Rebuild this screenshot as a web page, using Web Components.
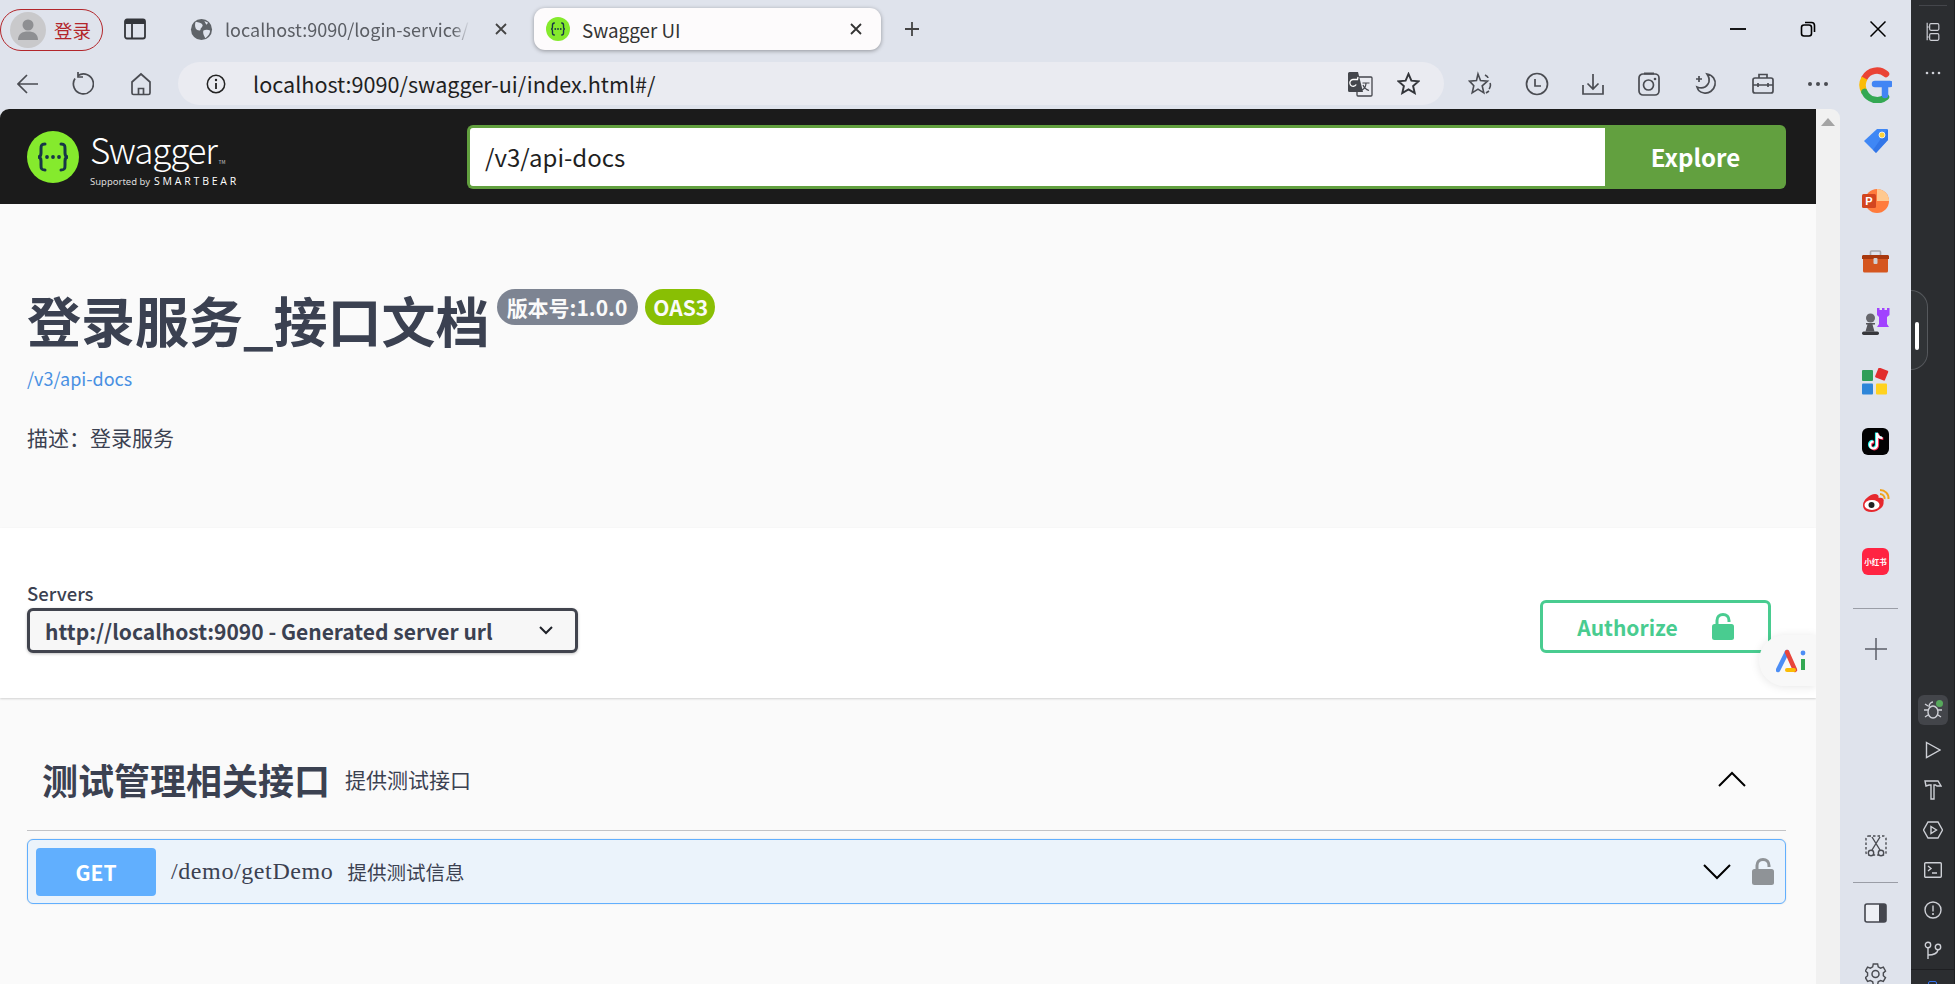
<!DOCTYPE html>
<html lang="zh">
<head>
<meta charset="utf-8">
<title>Swagger UI</title>
<style>
  html, body { margin: 0; height: 100%; overflow: hidden; background: #dfe3ec; }
  body { font-family: "Noto Sans CJK SC", "Noto Sans", sans-serif; color: #3b4151; }
</style>
</head>
<body>
<browser-window>
  <tab-strip slot="tabs"></tab-strip>
  <nav-bar slot="nav" url="localhost:9090/swagger-ui/index.html#/"></nav-bar>
  <side-dock slot="dock"></side-dock>
  <ide-strip slot="ide"></ide-strip>
  <swagger-page slot="page">
    <swagger-topbar slot="top" url="/v3/api-docs"></swagger-topbar>
    <api-info slot="info" link="/v3/api-docs" version="版本号:1.0.0" oas="OAS3">
      <span slot="title">登录服务_接口文档</span>
      描述&#xFF1A;登录服务
    </api-info>
    <server-bar slot="servers" server="http://localhost:9090 - Generated server url"></server-bar>
    <tag-section slot="tags" name="测试管理相关接口" note="提供测试接口">
      <op-block method="GET" path="/demo/getDemo" summary="提供测试信息"></op-block>
    </tag-section>
  </swagger-page>
</browser-window>

<script>
const LOGO = `<svg viewBox="0 0 52 52" width="100%" height="100%">
  <circle cx="26" cy="26" r="26" fill="#85ea2d"/>
  <g fill="none" stroke="#173647" stroke-width="3" stroke-linecap="round">
    <path d="M18 13c-4 0-4 2-4 5v4c0 2-1 4-3 4 2 0 3 2 3 4v4c0 3 0 5 4 5"/>
    <path d="M34 13c4 0 4 2 4 5v4c0 2 1 4 3 4-2 0-3 2-3 4v4c0 3 0 5-4 5"/>
  </g>
  <g fill="#173647"><circle cx="20" cy="26" r="1.900"/><circle cx="26" cy="26" r="1.900"/><circle cx="32" cy="26" r="1.900"/></g>
</svg>`;

const LOCK = `<svg viewBox="0 0 22 27" width="22" height="27">
  <path d="M5 13V7.500C5 3.800 7.500 1.500 11 1.500s6 2.300 6 6V9" fill="none" stroke="currentColor" stroke-width="3"/>
  <rect x="0" y="11" width="22" height="16" rx="2.500" fill="currentColor"/>
</svg>`;

class BrowserWindow extends HTMLElement {
  constructor() {
    super();
    this.attachShadow({mode: 'open'}).innerHTML = `
      <style>
        :host { display: grid; grid-template-columns: 1911px 44px; height: 984px; width: 1955px; overflow: hidden; }
        .main { display: flex; flex-direction: column; min-width: 0; height: 984px; }
        .body { display: grid; grid-template-columns: 1840px 71px; flex: 1; min-height: 0; }
        .left { display: flex; flex-direction: column; min-height: 0; }
        .view { flex: 1; min-height: 0; display: flex; }
      </style>
      <div class="main">
        <slot name="tabs"></slot>
        <div class="body">
          <div class="left">
            <slot name="nav"></slot>
            <div class="view"><slot name="page"></slot></div>
          </div>
          <slot name="dock"></slot>
        </div>
      </div>
      <slot name="ide"></slot>`;
  }
}

class TabStrip extends HTMLElement {
  constructor() {
    super();
    this.attachShadow({mode: 'open'}).innerHTML = `
      <style>
        :host { display: flex; align-items: center; height: 55px; padding-top: 2px; box-sizing: border-box; color: #444; font-size: 18.800px; font-family: "Noto Sans CJK SC", "Noto Sans", sans-serif; }
        .profile { display: flex; align-items: center; width: 103px; height: 42px; box-sizing: border-box; border: 1.500px solid #b3262b; border-radius: 21px; padding-left: 9px; margin-top: 2px; color: #b3262b; font: 18.500px "Noto Sans CJK SC", sans-serif; gap: 8px; }
        .avatar { width: 36px; height: 36px; flex: none; }
        .tabs-btn { margin-left: 21px; width: 22px; height: 22px; flex: none; }
        .tab { display: flex; align-items: center; height: 42px; margin-top: 1px; }
        .tab.idle { margin-left: 44px; width: 317px; color: #5b5e64; font-size: 18px; }
        .tab.idle .label { width: 250px; margin-left: 12px; white-space: nowrap; -webkit-mask-image: linear-gradient(90deg, #000 93%, transparent); mask-image: linear-gradient(90deg, #000 93%, transparent); }
        .tab.idle .x { margin-left: 25px; }
        .tab.active { width: 347px; margin-left: 27px; background: #fdfbfc; border-radius: 11px; box-shadow: 0 1px 4px rgba(0,0,0,.35); padding-left: 12px; box-sizing: border-box; color: #333; }
        .fav { width: 24px; height: 24px; flex: none; }
        .tab.active .label { margin-left: 12px; flex: 1; }
        .tab.active .x { margin-right: 19px; }
        .x { width: 12px; height: 12px; flex: none; }
        .plus { margin-left: 23px; width: 16px; height: 16px; }
        .win { margin-left: auto; display: flex; align-items: center; padding-right: 25px; gap: 54px; }
      </style>
      <div class="profile">
        <svg class="avatar" viewBox="0 0 36 36"><circle cx="18" cy="18" r="18" fill="#c9c9cb"/><circle cx="18" cy="13" r="5.500" fill="#8e8f92"/><path d="M8 28c0-6 4-8.500 10-8.500S28 22 28 28z" fill="#8e8f92"/></svg>
        <span>登录</span>
      </div>
      <svg class="tabs-btn" viewBox="0 0 22 22"><rect x="1" y="1.500" width="20" height="19" rx="2" fill="none" stroke="#33353a" stroke-width="1.800"/><path d="M1 2h20v4H1z" fill="#33353a"/><path d="M8 6v14" stroke="#33353a" stroke-width="1.800"/></svg>
      <div class="tab idle">
        <svg class="fav" viewBox="0 0 24 24" style="width:23px;height:23px"><circle cx="12" cy="12" r="11" fill="#5f6368"/><path d="M6 4c3 1 6 1 7 3s-2 3-2 5-4 1-5-1-1-5 0-7zM14 13c2-1 5-1 7 0 0 3-2 6-5 8-1-2-3-5-2-8zM15 3l4 2-2 2z" fill="#dfe3ec"/></svg>
        <span class="label">localhost:9090/login-service/</span>
        <svg class="x" viewBox="0 0 12 12"><path d="M1 1l10 10M11 1L1 11" stroke="#444" stroke-width="1.800"/></svg>
      </div>
      <div class="tab active">
        <span class="fav">${LOGO}</span>
        <span class="label">Swagger UI</span>
        <svg class="x" viewBox="0 0 12 12"><path d="M1 1l10 10M11 1L1 11" stroke="#333" stroke-width="1.800"/></svg>
      </div>
      <svg class="plus" viewBox="0 0 16 16"><path d="M8 1v14M1 8h14" stroke="#444" stroke-width="1.800"/></svg>
      <div class="win">
        <svg width="16" height="16" viewBox="0 0 16 16"><path d="M0 8h16" stroke="#000" stroke-width="1.800"/></svg>
        <svg width="16" height="16" viewBox="0 0 16 16"><rect x="1.500" y="4" width="10" height="11" rx="2.500" fill="none" stroke="#000" stroke-width="1.600"/><path d="M5 1.500h6.500a3 3 0 0 1 3 3V11" fill="none" stroke="#000" stroke-width="1.600"/></svg>
        <svg width="16" height="16" viewBox="0 0 16 16"><path d="M.5.500l15 15M15.500.500l-15 15" stroke="#000" stroke-width="1.500"/></svg>
      </div>`;
  }
}

class NavBar extends HTMLElement {
  connectedCallback() {
    const stroke = 'fill="none" stroke="#4a4c52" stroke-width="1.700"';
    this.attachShadow({mode: 'open'}).innerHTML = `
      <style>
        :host { display: flex; align-items: center; height: 54px; flex: none; padding: 3px 7px 0 17px; box-sizing: border-box; }
        svg { flex: none; }
        .addr { display: flex; align-items: center; width: 1266px; height: 43px; margin-left: 26px; margin-right: 24px; background: #eaebf1; border-radius: 22px; box-sizing: border-box; padding: 0 24px 0 28px; font: 21.600px "Noto Sans CJK SC", sans-serif; color: #1f1f1f; }
        .url { margin-left: 27px; flex: 1; }
        .tools { display: flex; align-items: center; gap: 33px; }
      </style>
      <svg width="22" height="22" viewBox="0 0 22 22"><path d="M21 11H2M10 2l-9 9 9 9" ${stroke}/></svg>
      <svg style="margin-left:33px" width="22" height="24" viewBox="0 0 22 24"><path d="M6 3.500a10 10 0 1 1-3 3" ${stroke}/><path d="M6 0v5h5" ${stroke}/></svg>
      <svg style="margin-left:36px" width="22" height="24" viewBox="0 0 22 24"><path d="M2 10l9-8 9 8v11a1.500 1.500 0 0 1-1.500 1.500h-15A1.500 1.500 0 0 1 2 21z" ${stroke}/><path d="M8.500 22.500v-6h5v6" ${stroke}/></svg>
      <div class="addr">
        <svg width="20" height="20" viewBox="0 0 20 20"><circle cx="10" cy="10" r="8.700" fill="none" stroke="#222" stroke-width="1.500"/><path d="M10 9v6" stroke="#222" stroke-width="1.800"/><circle cx="10" cy="6" r="1.200" fill="#222"/></svg>
        <span class="url">${this.getAttribute('url')}</span>
        <svg width="26" height="26" viewBox="0 0 26 26"><rect x="10" y="6" width="15" height="19" rx="1" fill="#eaebf1" stroke="#44464c" stroke-width="1.300"/><path d="M1 2.500A1.500 1.500 0 0 1 2.500 1H11l5 20H2.500A1.500 1.500 0 0 1 1 19.500z" fill="#44464c"/><path d="M11 6l-.5 2.500H5.800a3.400 3.400 0 1 0 3.400 5" fill="none" stroke="#fff" stroke-width="1.300"/><path d="M16 14c1 2.500 3 4.500 6 5.500M15.500 12h7M19 12c0 3-2 6-4 7" fill="none" stroke="#44464c" stroke-width="1.200"/></svg>
        <svg style="margin-left:24px" width="23" height="23" viewBox="0 0 24 24"><path d="M12 2l3 7 7.500.700-5.700 5 1.700 7.300-6.500-3.800L5.500 22l1.700-7.300-5.700-5L9 9z" fill="none" stroke="#33353a" stroke-width="2"/></svg>
      </div>
      <div class="tools">
        <svg width="24" height="26" viewBox="0 0 24 26"><path d="M10 3l2.500 6.500 7 .600-5.300 4.700 1.600 7-5.800-3.700-5.800 3.700 1.600-7L1.500 10.100l7-.600zM17 4c2 1 3 2 3 3M22 12c1 2 0 5-1 6M18 22l3-2" fill="none" stroke="#4a4c52" stroke-width="1.600"/></svg>
        <svg width="24" height="24" viewBox="0 0 24 24"><circle cx="12" cy="12" r="10.500" ${stroke}/><path d="M10 7v7h6" ${stroke} /></svg>
        <svg width="22" height="24" viewBox="0 0 22 24"><path d="M1 13v9h20v-9M11 2v15M5.500 11.500L11 17l5.500-5.500" ${stroke}/></svg>
        <svg width="24" height="26" viewBox="0 0 24 26"><rect x="2" y="3" width="20" height="21" rx="4" ${stroke} stroke-width="2"/><path d="M7 2.500h10" stroke="#4a4c52" stroke-width="2"/><circle cx="11.500" cy="14" r="5" ${stroke}/><circle cx="18" cy="8" r="1.300" fill="#4a4c52"/></svg>
        <svg width="24" height="26" viewBox="0 0 24 26"><path d="M13 3c6 1 9 6 8 11s-6 9-11 8-6-3-7-6c5 2 9 0 11-3s1-7-1-10zM5 5v6M2 8h6" ${stroke}/></svg>
        <svg width="24" height="24" viewBox="0 0 24 24"><rect x="2" y="6" width="20" height="15" rx="2" ${stroke}/><path d="M8 6V2.500h8V6M2 13h20M7 11v4M17 11v4" ${stroke}/></svg>
        <svg width="22" height="6" viewBox="0 0 22 6" style="margin-left:-1px"><circle cx="3" cy="3" r="2" fill="#4a4c52"/><circle cx="11" cy="3" r="2" fill="#4a4c52"/><circle cx="19" cy="3" r="2" fill="#4a4c52"/></svg>
      </div>`;
  }
}

class SwaggerPage extends HTMLElement {
  constructor() {
    super();
    this.attachShadow({mode: 'open'}).innerHTML = `
      <style>
        :host { display: flex; width: 1840px; height: 100%; }
        .doc { width: 1816px; background: #fafafa; border-top-left-radius: 9px; overflow: hidden; position: relative; display: flex; flex-direction: column; }
        .bar { width: 24px; background: #f1f1f1; border-top-right-radius: 9px; display: flex; justify-content: center; padding-top: 9px; box-sizing: border-box; }
        .bubble { position: absolute; right: 0; top: 526px; width: 57px; height: 51px; background: #f8f8f8; border-radius: 26px 0 0 26px; box-shadow: 0 1px 10px rgba(0,0,0,.1); display: flex; align-items: center; padding-left: 17px; box-sizing: border-box; }
      </style>
      <div class="doc">
        <slot name="top"></slot>
        <slot name="info"></slot>
        <slot name="servers"></slot>
        <slot name="tags"></slot>
        <div class="bubble">
          <svg width="30" height="24" viewBox="0 0 30 24"><path d="M2 21L11 3" stroke="#4d8ef5" stroke-width="4.500" stroke-linecap="round"/><path d="M11 3l8 18" stroke="#e8453c" stroke-width="4.500" stroke-linecap="round"/><path d="M11 21h7" stroke="#fbbc05" stroke-width="4" stroke-linecap="round"/><path d="M27 10v11" stroke="#34a853" stroke-width="4"/><circle cx="27" cy="4" r="2.400" fill="#4d8ef5"/></svg>
        </div>
      </div>
      <div class="bar"><svg width="14" height="8" viewBox="0 0 14 8"><path d="M7 0l7 8H0z" fill="#a4a4a4"/></svg></div>`;
  }
}

class SwaggerTopbar extends HTMLElement {
  connectedCallback() {
    this.attachShadow({mode: 'open'}).innerHTML = `
      <style>
        :host { display: flex; align-items: center; height: 95px; flex: none; background: #1b1b1b; padding: 0 30px 0 27px; box-sizing: border-box; }
        .logo { display: flex; align-items: center; width: 440px; flex: none; }
        .mark { width: 52px; height: 52px; flex: none; }
        .words { margin-left: 11px; color: #fff; display: flex; flex-direction: column; }
        .name { font: 300 35px/40px "Noto Sans CJK SC", sans-serif; letter-spacing: -1.200px; margin-top: 4px; }
        .name sup { font-size: 5px; letter-spacing: 0; vertical-align: 0; margin-left: 2px; }
        .by { font: 9.500px/13px "Noto Sans", sans-serif; display: flex; align-items: center; gap: 4px; color: #ddd; margin-top: -7px; }
        .by b { font: 500 10.500px/13px "Open Sans", sans-serif; letter-spacing: 2.800px; color: #fff; }
        form { display: flex; flex: 1; height: 64px; margin: 0; }
        .in { flex: 1; background: #fff; border: 3px solid #62a03f; border-right: none; border-radius: 6px 0 0 6px; box-sizing: border-box; font: 24px/58px "Noto Sans CJK SC", sans-serif; color: #1f1f1f; padding-left: 15px; }
        .go { width: 181px; background: #62a03f; border-radius: 0 6px 6px 0; color: #fff; font: 700 24px/64px "Noto Sans CJK SC", sans-serif; text-align: center; }
      </style>
      <div class="logo">
        <span class="mark">${LOGO}</span>
        <div class="words">
          <span class="name">Swagger<sup>TM</sup></span>
          <span class="by">Supported by <b>SMARTBEAR</b></span>
        </div>
      </div>
      <form>
        <div class="in">${this.getAttribute('url')}</div>
        <div class="go">Explore</div>
      </form>`;
  }
}

class ApiInfo extends HTMLElement {
  connectedCallback() {
    this.attachShadow({mode: 'open'}).innerHTML = `
      <style>
        :host { display: block; height: 324px; flex: none; padding: 80px 27px 0; box-sizing: border-box; background: #fafafa; }
        .head { display: flex; align-items: flex-start; gap: 6px; }
        h2 { margin: 0; font: 700 54px/72px "Noto Sans CJK SC", sans-serif; color: #3b4151; }
        .stamp { display: flex; gap: 7px; margin-left: 1px; margin-top: 5px; }
        .stamp span { color: #fafafa; font: 700 21px/36px "Noto Sans CJK SC", sans-serif; border-radius: 18px; padding: 0 11px 0 10px; height: 36px; background: #7d8492; }
        .stamp .oas { background: #89bf04; padding: 0 7px 0 8px; }
        a { display: block; color: #4990e2; font: 18px/26px "Noto Sans CJK SC", sans-serif; margin-top: 9px; }
        .desc { margin-top: 31px; font: 21px/30px "Noto Sans CJK SC", sans-serif; color: #3b4151; }
      </style>
      <div class="head">
        <h2><slot name="title"></slot></h2>
        <div class="stamp"><span>${this.getAttribute('version')}</span><span class="oas">${this.getAttribute('oas')}</span></div>
      </div>
      <a>${this.getAttribute('link')}</a>
      <div class="desc"><slot></slot></div>`;
  }
}

class ServerBar extends HTMLElement {
  connectedCallback() {
    this.attachShadow({mode: 'open'}).innerHTML = `
      <style>
        :host { display: flex; justify-content: space-between; align-items: flex-end; height: 170px; flex: none; background: #fff; box-shadow: 0 1px 2px rgba(0,0,0,.16); padding: 0 45px 45px 27px; box-sizing: border-box; position: relative; }
        .label { font: 500 18.500px/24px "Noto Sans CJK SC", sans-serif; color: #3b4151; margin-bottom: 3px; }
        .select { display: flex; align-items: center; justify-content: space-between; width: 551px; height: 45px; box-sizing: border-box; border: 3px solid #41444e; border-radius: 6px; background: #f7f7f7; box-shadow: 0 1px 3px rgba(0,0,0,.25); padding: 0 22px 0 15px; font: 700 21px/39px "Noto Sans CJK SC", sans-serif; color: #3b4151; white-space: nowrap; }
        .select span { padding-top: 2px; line-height: 37px; }
        .auth { display: flex; align-items: center; justify-content: center; gap: 34px; width: 231px; height: 53px; box-sizing: border-box; border: 3px solid #49cc90; border-radius: 6px; color: #49cc90; font: 700 21px "Noto Sans CJK SC", sans-serif; }
      </style>
      <div>
        <div class="label">Servers</div>
        <div class="select">
          <span>${this.getAttribute('server')}</span>
          <svg width="14" height="9" viewBox="0 0 14 9"><path d="M1 1l6 6 6-6" fill="none" stroke="#1f2229" stroke-width="2"/></svg>
        </div>
      </div>
      <div class="auth"><span>Authorize</span>${LOCK}</div>`;
  }
}

class TagSection extends HTMLElement {
  connectedCallback() {
    this.attachShadow({mode: 'open'}).innerHTML = `
      <style>
        :host { display: block; padding: 50px 30px 0 27px; }
        .head { display: flex; align-items: center; height: 83px; border-bottom: 1.500px solid #c2c3c6; padding: 0 0 20px 15px; box-sizing: border-box; }
        h3 { margin: 0; font: 700 36px/48px "Noto Sans CJK SC", sans-serif; color: #3b4151; }
        small { margin-left: 15px; font: 21px "Noto Sans CJK SC", sans-serif; color: #3b4151; }
        svg { margin-left: auto; margin-right: 40px; }
        .ops { display: block; margin-top: 8px; }
      </style>
      <div class="head">
        <h3>${this.getAttribute('name')}</h3>
        <small>${this.getAttribute('note')}</small>
        <svg width="28" height="16" viewBox="0 0 28 16"><path d="M1 15L14 2l13 13" fill="none" stroke="#000" stroke-width="2"/></svg>
      </div>
      <div class="ops"><slot></slot></div>`;
  }
}

class OpBlock extends HTMLElement {
  connectedCallback() {
    this.attachShadow({mode: 'open'}).innerHTML = `
      <style>
        :host { display: flex; align-items: center; height: 65px; box-sizing: border-box; background: #ebf3fb; border: 1.500px solid #61affe; border-radius: 6px; padding: 0 11px 0 8px; box-shadow: 0 0 2px rgba(0,0,0,.12); }
        .method { width: 120px; height: 48px; flex: none; background: #61affe; border-radius: 4px; color: #fff; font: 700 21px/48px "Noto Sans CJK SC", sans-serif; text-align: center; }
        .path { margin-left: 15px; font: 24px "Liberation Serif", "DejaVu Serif", serif; letter-spacing: .600px; color: #3b4151; }
        .sum { margin-left: 14px; font: 19.500px "Noto Sans CJK SC", sans-serif; color: #3b4151; }
        .ch { margin-left: auto; margin-right: 21px; }
        .lock { color: #8f9397; display: flex; }
      </style>
      <span class="method">${this.getAttribute('method')}</span>
      <span class="path">${this.getAttribute('path')}</span>
      <span class="sum">${this.getAttribute('summary')}</span>
      <svg class="ch" width="28" height="16" viewBox="0 0 28 16"><path d="M1 1l13 13L27 1" fill="none" stroke="#000" stroke-width="2"/></svg>
      <span class="lock">${LOCK}</span>`;
  }
}

class SideDock extends HTMLElement {
  constructor() {
    super();
    this.attachShadow({mode: 'open'}).innerHTML = `
      <style>
        :host { display: flex; flex-direction: column; align-items: center; padding-top: 12px; box-sizing: border-box; height: 100%; }
        svg { display: block; flex: none; }
        .slot { height: 60px; display: flex; align-items: center; justify-content: center; width: 100%; flex: none; }
        .slot.g { height: 36px; margin-bottom: 8px; }
        hr { width: 45px; border: none; border-top: 1.500px solid #9a9da6; margin: 0; flex: none; }
        .red { width: 27px; height: 27px; border-radius: 6px; background: #ff2442; color: #fff; font: 700 7.500px/27px "Noto Sans CJK SC", sans-serif; text-align: center; white-space: nowrap; }
        .bottom { margin-top: auto; margin-bottom: 1px; display: flex; flex-direction: column; align-items: center; width: 100%; }
      </style>
      <div class="slot g"><svg width="33" height="36" viewBox="0 0 33 36">
        <path d="M27 7A14 14 0 0 0 5.500 11" fill="none" stroke="#ea4335" stroke-width="6.500" stroke-linecap="round"/>
        <path d="M5.500 11a14 14 0 0 0 0 14" fill="none" stroke="#fbbc05" stroke-width="6.500"/>
        <path d="M5.500 25A14 14 0 0 0 27 30" fill="none" stroke="#34a853" stroke-width="6.500" stroke-linecap="round"/>
        <path d="M16 17h15M26 17v11" fill="none" stroke="#4285f4" stroke-width="6.500" stroke-linecap="round"/>
      </svg></div>
      <div class="slot"><svg width="26" height="26" viewBox="0 0 26 26"><path d="M14 1h10a1 1 0 0 1 1 1v10L13 25 1 13z" fill="#3f87f5"/><path d="M25 2v10L13 25l-3-3L24 2z" fill="#2a6be0" opacity=".6"/><circle cx="19" cy="7" r="3" fill="#fbd13a" stroke="#fff" stroke-width=".8"/></svg></div>
      <div class="slot"><svg width="27" height="24" viewBox="0 0 27 24"><circle cx="15" cy="12" r="12" fill="#ff7b3c"/><path d="M15 12V0a12 12 0 0 1 12 12z" fill="#ffc98f"/><rect x="0" y="5" width="14" height="14" rx="1.500" fill="#d3451f"/><text x="7" y="16" text-anchor="middle" font-size="11" font-weight="700" fill="#fff" font-family="Liberation Sans">P</text></svg></div>
      <div class="slot"><svg width="27" height="23" viewBox="0 0 27 23"><path d="M8.500 5V2a1 1 0 0 1 1-1h8a1 1 0 0 1 1 1v3" fill="none" stroke="#a8a8ac" stroke-width="1.600"/><path d="M0 6a2 2 0 0 1 1-1h25a2 2 0 0 1 1 1v3H0z" fill="#a8380e"/><path d="M1 9h25v12a1.500 1.500 0 0 1-1.500 1.500h-22A1.500 1.500 0 0 1 1 21z" fill="#d5561f"/><rect x="11.500" y="8" width="4" height="6" rx="1" fill="#cfcfd2"/></svg></div>
      <div class="slot"><svg width="28" height="27" viewBox="0 0 28 27"><path d="M15 0h2.500v2h2.500V0h2.500v2H25V0h2.500v7L25 9v7l2 3H15l2-3V9l-2-2z" fill="#a142ff"/><circle cx="8.500" cy="10" r="4.500" fill="#66676c"/><path d="M4 15h9v1.500h-2.500l2 7h-9l2-7H4z" fill="#55565b"/><rect x="0" y="23.500" width="17" height="3.500" rx="1.700" fill="#36373b"/></svg></div>
      <div class="slot"><svg width="27" height="27" viewBox="0 0 27 27"><rect x="0" y="2" width="11" height="11" rx="1" fill="#2f9e58"/><rect x="14.500" y="1" width="10.500" height="10.500" rx="1" fill="#e22d2d" transform="rotate(22 20 6)"/><rect x="0" y="15.500" width="11" height="11" rx="1" fill="#2e86d9"/><rect x="14" y="15.500" width="11" height="11" rx="1" fill="#ffd21f"/></svg></div>
      <div class="slot"><svg width="27" height="27" viewBox="0 0 27 27"><rect width="27" height="27" rx="6" fill="#020203"/><path d="M15 5v12a3.500 3.500 0 1 1-3.500-3.500M15 5c.5 3 2.500 5 5.500 5" fill="none" stroke="#25f4ee" stroke-width="2.600" transform="translate(-.8 -.5)"/><path d="M15 5v12a3.500 3.500 0 1 1-3.500-3.500M15 5c.5 3 2.500 5 5.500 5" fill="none" stroke="#fe2c55" stroke-width="2.600" transform="translate(.8 .6)"/><path d="M15 5v12a3.500 3.500 0 1 1-3.500-3.500M15 5c.5 3 2.500 5 5.500 5" fill="none" stroke="#fff" stroke-width="2.200"/></svg></div>
      <div class="slot"><svg width="28" height="24" viewBox="0 0 28 24"><path d="M1 16c0-5 7-11 12-11 3 0 4 2 3.500 4 4-1 6 1 5 4 1 5-6 10-12 10S1 20 1 16z" fill="#e6282e"/><ellipse cx="10" cy="16" rx="7.500" ry="5" fill="#fff"/><circle cx="9.500" cy="16" r="3" fill="#222"/><path d="M18 1c5 0 9 4 8.500 9M18 5c2.500 0 5 2 4.500 5" fill="none" stroke="#f0a31c" stroke-width="2"/></svg></div>
      <div class="slot"><div class="red">小红书</div></div>
      <hr style="margin-top:17px">
      <div style="margin-top:29px"><svg width="22" height="22" viewBox="0 0 22 22"><path d="M11 0v22M0 11h22" stroke="#5c5f68" stroke-width="1.500"/></svg></div>
      <div class="bottom">
        <svg width="22" height="22" viewBox="0 0 22 22"><rect x="1" y="1" width="20" height="19" rx="2.500" fill="none" stroke="#4a4c52" stroke-width="1.400" stroke-dasharray="2.500 2"/><path d="M7 2l8 13M15 2L7 15" stroke="#4a4c52" stroke-width="1.400"/><circle cx="6" cy="18" r="2.700" fill="#dfe3ec" stroke="#4a4c52" stroke-width="1.400"/><circle cx="16" cy="18" r="2.700" fill="#dfe3ec" stroke="#4a4c52" stroke-width="1.400"/></svg>
        <hr style="margin-top:25px">
        <svg style="margin-top:20px" width="23" height="20" viewBox="0 0 23 20"><rect x="1" y="1" width="21" height="18" rx="2" fill="#eef0f5" stroke="#44464e" stroke-width="1.600"/><path d="M15 1h5a2 2 0 0 1 2 2v14a2 2 0 0 1-2 2h-5z" fill="#44464e"/></svg>
        <svg style="margin-top:40px;margin-bottom:-2px" width="22" height="22" viewBox="0 0 22 22"><path d="M8.700 1h4.600l.600 3 2.500 1.400 2.900-1 2.300 4-2.300 2v3l2.300 2-2.300 4-2.900-1-2.500 1.400-.6 3H8.700l-.6-3-2.500-1.400-2.900 1-2.300-4 2.300-2v-3l-2.300-2 2.300-4 2.900 1L8.100 4z" transform="scale(.95)" fill="none" stroke="#4a4c52" stroke-width="1.500"/><circle cx="10.500" cy="11" r="3.500" fill="none" stroke="#4a4c52" stroke-width="1.500"/></svg>
      </div>`;
  }
}

class IdeStrip extends HTMLElement {
  constructor() {
    super();
    const s = 'fill="none" stroke="#ced0d6" stroke-width="1.400"';
    this.attachShadow({mode: 'open'}).innerHTML = `
      <style>
        :host { display: flex; flex-direction: column; align-items: center; background: #2b2d30; height: 984px; width: 44px; position: relative; box-sizing: border-box; border-right: 1px solid #1e1f22; overflow: hidden; }
        .top { width: 28px; border-top: 1px solid #44464b; margin-top: 5px; flex: none; }
        .tree { margin-top: 16px; }
        .dots { margin-top: 29px; }
        .handle { position: absolute; left: 0; top: 290px; width: 17px; height: 80px; box-sizing: border-box; border: 1px solid #55585c; border-left: none; border-radius: 0 17px 17px 0; background: #303336; }
        .handle i { position: absolute; left: 4px; top: 31px; width: 4px; height: 28px; background: #fff; border-radius: 2px; }
        .tools { margin-top: auto; display: flex; flex-direction: column; align-items: center; gap: 10px; }
        .btn { width: 30px; height: 30px; display: flex; align-items: center; justify-content: center; border-radius: 6px; position: relative; }
        .btn.on { background: #43454a; }
        .btn.on i { position: absolute; right: 5px; top: 5px; width: 7px; height: 7px; background: #57a95c; border-radius: 50%; }
        .rule { width: 100%; border-top: 1px solid #1e1f22; margin-top: 4px; height: 14px; display: flex; justify-content: center; }
        .rule b { width: 7px; height: 10px; margin-top: 11px; border: 1.500px solid #3574f0; border-radius: 2px; }
      </style>
      <div class="top"></div>
      <svg class="tree" width="16" height="20" viewBox="0 0 16 24"><path d="M1 1v21M1 6h2M1 18h2" ${s}/><rect x="4" y="2" width="11" height="8" rx="1.500" ${s}/><rect x="4" y="14" width="11" height="8" rx="1.500" ${s}/></svg>
      <svg class="dots" width="16" height="4" viewBox="0 0 16 4"><circle cx="2" cy="2" r="1.300" fill="#ced0d6"/><circle cx="8" cy="2" r="1.300" fill="#ced0d6"/><circle cx="14" cy="2" r="1.300" fill="#ced0d6"/></svg>
      <div class="handle"><i></i></div>
      <div class="tools">
        <div class="btn on"><svg width="20" height="20" viewBox="0 0 20 20"><ellipse cx="10" cy="12" rx="5" ry="6" ${s}/><path d="M6 7c0-3 2-5 4-5M5 10H1M5 15l-3 2M15 10h4M15 15l3 2M5 6L2 4" ${s}/></svg><i></i></div>
        <div class="btn"><svg width="16" height="18" viewBox="0 0 16 18"><path d="M1.500 1.500L15 9 1.500 16.500z" ${s}/></svg></div>
        <div class="btn"><svg width="18" height="20" viewBox="0 0 18 20"><path d="M1 1h13l3 5h-4l-1.500-1H10v14H7V5H5L2 6z" ${s}/></svg></div>
        <div class="btn"><svg width="20" height="18" viewBox="0 0 20 18"><path d="M5 1h10l4.500 8-4.500 8H5L.5 9z" ${s}/><path d="M8 5.500L13.500 9 8 12.500z" ${s}/></svg></div>
        <div class="btn"><svg width="18" height="16" viewBox="0 0 18 16"><rect x=".700" y=".700" width="16.600" height="14.600" rx="1" ${s}/><path d="M4 4l3 2.500L4 9M8 11h5" ${s}/></svg></div>
        <div class="btn"><svg width="18" height="18" viewBox="0 0 18 18"><circle cx="9" cy="9" r="8" ${s}/><path d="M9 4.500v6" ${s} stroke-width="1.800"/><circle cx="9" cy="13" r="1.100" fill="#ced0d6"/></svg></div>
        <div class="btn"><svg width="18" height="19" viewBox="0 0 18 19"><circle cx="4" cy="4" r="2.700" ${s}/><circle cx="14" cy="6" r="2.700" ${s}/><path d="M4 7v11M4 14c5 0 9-1 10-5" ${s}/></svg></div>
      </div>
      <div class="rule"><b></b></div>`;
  }
}

customElements.define('browser-window', BrowserWindow);
customElements.define('tab-strip', TabStrip);
customElements.define('nav-bar', NavBar);
customElements.define('swagger-page', SwaggerPage);
customElements.define('swagger-topbar', SwaggerTopbar);
customElements.define('api-info', ApiInfo);
customElements.define('server-bar', ServerBar);
customElements.define('tag-section', TagSection);
customElements.define('op-block', OpBlock);
customElements.define('side-dock', SideDock);
customElements.define('ide-strip', IdeStrip);
</script>
</body>
</html>
